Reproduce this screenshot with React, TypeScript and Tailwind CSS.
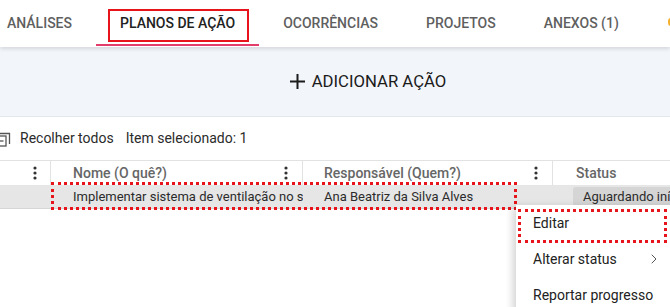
import { ChevronRight } from 'lucide-react'

const tabs = [
  { label: 'ANÁLISES', active: false },
  { label: 'PLANOS DE AÇÃO', active: true },
  { label: 'OCORRÊNCIAS', active: false },
  { label: 'PROJETOS', active: false },
  { label: 'ANEXOS (1)', active: false },
]

function Kebab() {
  return (
    <svg width="4" height="14" viewBox="0 0 4 14" className="shrink-0">
      <circle cx="2" cy="2" r="1.6" fill="#333" />
      <circle cx="2" cy="7" r="1.6" fill="#333" />
      <circle cx="2" cy="12" r="1.6" fill="#333" />
    </svg>
  )
}

function CollapseIcon() {
  return (
    <svg width="16" height="16" viewBox="0 0 16 16" className="shrink-0" fill="none" stroke="#555" strokeWidth="1.3">
      <rect x="1" y="5" width="10" height="10" />
      <path d="M4 2.5h10.5V13" />
      <path d="M3.5 10h5" />
    </svg>
  )
}

export default function App() {
  return (
    <div className="relative w-[670px] h-[307px] overflow-hidden bg-white font-['Roboto',sans-serif] text-[#333]">
      {/* Tabs */}
      <div className="relative z-10 h-[47px] bg-white shadow-[0_2px_4px_rgba(0,0,0,0.12)] flex items-stretch">
        <div className="flex items-stretch -ml-[17px]">
          {tabs.map(t => (
            <div
              key={t.label}
              className={`relative flex items-center px-[24px] text-[14px] font-medium whitespace-nowrap ${t.active ? 'text-[#222]' : 'text-[#5f5f5f]'}`}
            >
              {t.active && (
                <>
                  <div className="absolute left-[12px] right-[10px] top-[9px] bottom-[5px] border-2 border-[#e8141b]" />
                  <div className="absolute left-0 right-0 bottom-[1px] h-[2px] bg-[#e23d6b]" />
                </>
              )}
              <span className="relative">{t.label}</span>
            </div>
          ))}
        </div>
        <div className="absolute right-[-4px] top-[18px] w-[6px] h-[8px] rounded-sm bg-[#f5b02e]" />
      </div>

      {/* Add action band */}
      <div className="h-[70px] bg-[#f2f5fa] border-b border-[#e4e7ec] flex items-center justify-center">
        <div className="flex items-center gap-[7px] ml-[66px] text-[16.7px] text-[#1b1b1b]">
          <svg width="15" height="15" viewBox="0 0 15 15" stroke="#1b1b1b" strokeWidth="2">
            <path d="M7.5 0v15M0 7.5h15" />
          </svg>
          <span>ADICIONAR AÇÃO</span>
        </div>
      </div>

      {/* Toolbar */}
      <div className="h-[43px] flex items-center text-[14px] text-[#2b2b2b]">
        <div className="-ml-[5px] flex items-center gap-[9px]">
          <CollapseIcon />
          <span>Recolher todos</span>
        </div>
        <span className="ml-[12px]">Item selecionado: 1</span>
      </div>

      {/* Table header */}
      <div className="h-[25px] border-t border-[#e2e2e2] flex text-[14px] font-medium text-[#666]">
        <div className="w-[51px] flex items-center justify-end pr-[13px] border-r border-[#e2e2e2]">
          <Kebab />
        </div>
        <div className="w-[252px] flex items-center justify-between pl-[22px] pr-[14px] border-r border-[#e2e2e2]">
          <span>Nome (O quê?)</span>
          <Kebab />
        </div>
        <div className="w-[250px] flex items-center justify-between pl-[21px] pr-[14px] border-r border-[#e2e2e2]">
          <span>Responsável (Quem?)</span>
          <Kebab />
        </div>
        <div className="flex-1 flex items-center pl-[23px]">
          <span>Status</span>
        </div>
      </div>

      {/* Selected row */}
      <div className="h-[24px] bg-[#e6e6e6] border-b border-[#d6d6d6] flex text-[13px] text-[#2b2b2b]">
        <div className="w-[51px]" />
        <div className="w-[252px] flex items-center pl-[22px] overflow-hidden whitespace-nowrap">
          Implementar sistema de ventilação no setor de produção
        </div>
        <div className="w-[250px] flex items-center pl-[21px] whitespace-nowrap">
          Ana Beatriz da Silva Alves
        </div>
        <div className="flex-1 flex items-center pl-[20px] overflow-hidden">
          <span className="h-[19px] flex items-center px-[10px] rounded-[3px] bg-[#d5d5d5] whitespace-nowrap">Aguardando início</span>
        </div>
      </div>

      {/* Row highlight annotation */}
      <div className="absolute left-[51px] top-[182px] w-[466px] h-[28px] border-[3px] border-dotted border-[#e8141b]" />

      {/* Context menu */}
      <div className="absolute left-[516px] top-[205px] w-[170px] bg-white shadow-[-3px_2px_8px_rgba(0,0,0,0.18)] text-[14px] text-[#222]">
        <div className="relative h-[36px] flex items-center pl-[17px]">
          <div className="absolute left-[2px] top-[4px] w-[149px] h-[34px] border-[3px] border-dotted border-[#e8141b]" />
          <span className="relative">Editar</span>
        </div>
        <div className="h-[36px] flex items-center pl-[17px] pr-[24px] justify-between">
          <span>Alterar status</span>
          <ChevronRight size={16} strokeWidth={1.5} color="#555" />
        </div>
        <div className="h-[36px] flex items-center pl-[17px]">
          <span>Reportar progresso</span>
        </div>
      </div>
    </div>
  )
}
